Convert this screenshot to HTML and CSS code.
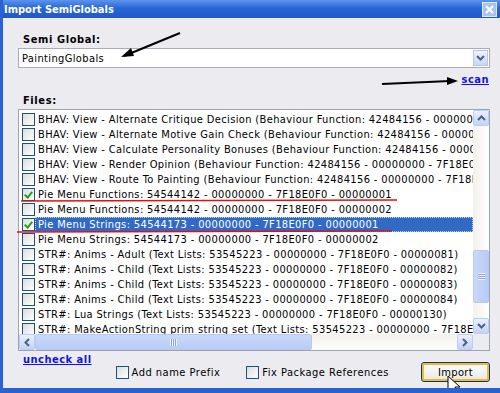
FILE: index.html
```html
<!DOCTYPE html>
<html lang="en">
<head>
    <meta charset="UTF-8">
    <title>Import SemiGlobals</title>
    <link rel="stylesheet" href="styles.css">
</head>
<body>
    <div class="window">
        <div class="titlebar">
            <span class="title">Import SemiGlobals</span>
            <span class="close">
                <svg width="11" height="11" viewBox="0 0 11 11"><path d="M2 2 L9 9 M9 2 L2 9" stroke="#fff" stroke-width="2"/></svg>
            </span>
        </div>

        <div class="content">
            <div class="label">Semi Global:</div>
            <div class="combo">
                <span class="combo-text">PaintingGlobals</span>
                <span class="btn-arrow">
                    <svg width="9" height="6" viewBox="0 0 9 6"><path d="M1 1 L4.5 4.5 L8 1" fill="none" stroke="#4d6185" stroke-width="2"/></svg>
                </span>
            </div>
            <div class="scan-row"><a class="link" href="#">scan</a></div>

            <div class="label files">Files:</div>
            <div class="listbox">
                <div class="list-main">
                    <div class="rows">
                        <div class="row"><span class="cb"></span><span class="txt">BHAV: View - Alternate Critique Decision (Behaviour Function: 42484156 - 00000000 - 7F18E0F0 - 00000001)</span></div>
                        <div class="row"><span class="cb"></span><span class="txt">BHAV: View - Alternate Motive Gain Check (Behaviour Function: 42484156 - 00000000 - 7F18E0F0 - 00000001)</span></div>
                        <div class="row"><span class="cb"></span><span class="txt">BHAV: View - Calculate Personality Bonuses (Behaviour Function: 42484156 - 00000000 - 7F18E0F0 - 00000001)</span></div>
                        <div class="row"><span class="cb"></span><span class="txt">BHAV: View - Render Opinion (Behaviour Function: 42484156 - 00000000 - 7F18E0F0 - 00000001)</span></div>
                        <div class="row"><span class="cb"></span><span class="txt">BHAV: View - Route To Painting (Behaviour Function: 42484156 - 00000000 - 7F18E0F0 - 00000001)</span></div>
                        <div class="row"><span class="cb checked"></span><span class="txt">Pie Menu Functions: 54544142 - 00000000 - 7F18E0F0 - 00000001</span></div>
                        <div class="row"><span class="cb"></span><span class="txt">Pie Menu Functions: 54544142 - 00000000 - 7F18E0F0 - 00000002</span></div>
                        <div class="row selected"><span class="cb checked"></span><span class="txt">Pie Menu Strings: 54544173 - 00000000 - 7F18E0F0 - 00000001</span></div>
                        <div class="row"><span class="cb"></span><span class="txt">Pie Menu Strings: 54544173 - 00000000 - 7F18E0F0 - 00000002</span></div>
                        <div class="row"><span class="cb"></span><span class="txt">STR#: Anims - Adult (Text Lists: 53545223 - 00000000 - 7F18E0F0 - 00000081)</span></div>
                        <div class="row"><span class="cb"></span><span class="txt">STR#: Anims - Child (Text Lists: 53545223 - 00000000 - 7F18E0F0 - 00000082)</span></div>
                        <div class="row"><span class="cb"></span><span class="txt">STR#: Anims - Child (Text Lists: 53545223 - 00000000 - 7F18E0F0 - 00000083)</span></div>
                        <div class="row"><span class="cb"></span><span class="txt">STR#: Anims - Child (Text Lists: 53545223 - 00000000 - 7F18E0F0 - 00000084)</span></div>
                        <div class="row"><span class="cb"></span><span class="txt">STR#: Lua Strings (Text Lists: 53545223 - 00000000 - 7F18E0F0 - 00000130)</span></div>
                        <div class="row"><span class="cb"></span><span class="txt">STR#: MakeActionString prim string set (Text Lists: 53545223 - 00000000 - 7F18E0F0 - 00000001)</span></div>
                    </div>
                    <div class="vscroll">
                        <span class="sbtn">
                            <svg width="9" height="6" viewBox="0 0 9 6"><path d="M1 5 L4.5 1.5 L8 5" fill="none" stroke="#4d6185" stroke-width="2"/></svg>
                        </span>
                        <div class="vtrack">
                            <span class="vthumb"><span class="grip-h"></span></span>
                        </div>
                        <span class="sbtn">
                            <svg width="9" height="6" viewBox="0 0 9 6"><path d="M1 1 L4.5 4.5 L8 1" fill="none" stroke="#4d6185" stroke-width="2"/></svg>
                        </span>
                    </div>
                </div>
                <div class="hscroll">
                    <span class="sbtn">
                        <svg width="6" height="9" viewBox="0 0 6 9"><path d="M5 1 L1.5 4.5 L5 8" fill="none" stroke="#4d6185" stroke-width="2"/></svg>
                    </span>
                    <div class="htrack">
                        <span class="hthumb"><span class="grip-v"></span></span>
                    </div>
                    <span class="sbtn">
                        <svg width="6" height="9" viewBox="0 0 6 9"><path d="M1 1 L4.5 4.5 L1 8" fill="none" stroke="#4d6185" stroke-width="2"/></svg>
                    </span>
                    <span class="corner"></span>
                </div>
            </div>

            <div class="footer">
                <a class="link" href="#">uncheck all</a>
                <label class="opt opt-prefix"><span class="cb"></span>Add name Prefix</label>
                <label class="opt opt-fix"><span class="cb"></span>Fix Package References</label>
                <button class="import">Import</button>
            </div>
        </div>

        <!-- hand-drawn annotations on top of the dialog -->
        <svg class="annot" width="500" height="393" viewBox="0 0 500 393">
            <path d="M180 33 L124 56" stroke="#000" stroke-width="2" fill="none"/>
            <path d="M121 57 L131 48 L134 56 Z" fill="#000"/>
            <path d="M382 84 L450 81" stroke="#000" stroke-width="2" fill="none"/>
            <path d="M458 81 L447 77 L447 85 Z" fill="#000"/>
            <path d="M21 201 L397 200" stroke="#e01010" stroke-width="1.5" fill="none"/>
            <path d="M17 232 L392 231" stroke="#e01010" stroke-width="1.5" fill="none"/>
            <path d="M448 376 L448 392 L452 388 L455 393 L457 392 L455 387 L460 387 Z" fill="#fff" stroke="#000" stroke-width="1"/>
        </svg>
    </div>
</body>
</html>
```

FILE: styles.css
```css
body {
    margin: 0;
    font-family: "DejaVu Sans Condensed", "DejaVu Sans", sans-serif;
    font-size: 11px;
    letter-spacing: 0.37px;
    color: #000;
}

.window {
    position: relative;
    width: 500px;
    height: 393px;
    background: #ecebef;
    border-left: 3px solid #2a62d2;
    box-sizing: border-box;
    border-bottom: 5px solid #2a62d2;
    overflow: hidden;
}

.titlebar {
    height: 18px;
    margin-left: -3px;
    display: flex;
    align-items: center;
    justify-content: space-between;
    padding: 0 3px 0 4px;
    background: linear-gradient(#5b95ec, #2a66d6 45%, #1f58c8);
    color: #fff;
}

.title {
    font-weight: bold;
    font-size: 11px;
    letter-spacing: 0;
}

.close {
    width: 13px;
    height: 13px;
    display: flex;
    align-items: center;
    justify-content: center;
    background: #a9c3ef;
    border: 1px solid #dfe9fb;
}

.content {
    padding: 14px 10px 0 15px;
}

.label {
    font-weight: bold;
    height: 16px;
    line-height: 16px;
    padding-left: 5px;
    letter-spacing: 0.6px;
}

.combo {
    height: 20px;
    box-sizing: border-box;
    border: 1px solid #a8adb8;
    background: #fff;
    display: flex;
    align-items: center;
    justify-content: space-between;
    padding: 0 1px 0 3px;
}

.btn-arrow {
    width: 15px;
    height: 16px;
    box-sizing: border-box;
    border: 1px solid #b7c6e6;
    background: linear-gradient(#eef3fd, #c6d6f5);
    display: flex;
    align-items: center;
    justify-content: center;
}

.scan-row {
    height: 22px;
    display: flex;
    justify-content: flex-end;
    align-items: center;
    padding-right: 1px;
}

.link {
    color: #1212ee;
    font-weight: bold;
    text-decoration: underline;
    letter-spacing: 0.5px;
}

.files {
    margin-top: 3px;
}

.listbox {
    height: 242px;
    box-sizing: border-box;
    border: 1px solid #9ca4b1;
    background: #fff;
    display: flex;
    flex-direction: column;
}

.list-main {
    flex: 1;
    display: flex;
    min-height: 0;
}

.rows {
    flex: 1;
    overflow: hidden;
    padding-top: 2px;
    min-width: 0;
}

.row {
    height: 15px;
    display: flex;
    align-items: center;
    white-space: nowrap;
    padding-left: 3px;
}

.row .txt {
    padding-left: 3px;
    height: 15px;
    line-height: 15px;
    flex: 1;
}

.row.selected .txt {
    background: #316ac5;
    color: #fff;
    outline: 1px dotted #c9d6f0;
    outline-offset: -1px;
}

.cb {
    width: 13px;
    height: 13px;
    box-sizing: border-box;
    border: 1px solid #1c5180;
    background: linear-gradient(135deg, #dcdcd7, #fff);
    flex-shrink: 0;
    position: relative;
}

.cb.checked::after {
    content: "";
    position: absolute;
    left: 3px;
    top: 1px;
    width: 3px;
    height: 6px;
    border: solid #21a121;
    border-width: 0 2px 2px 0;
    transform: rotate(40deg);
}

.vscroll {
    width: 16px;
    display: flex;
    flex-direction: column;
    background: #f4f4f0;
}

.sbtn {
    width: 16px;
    height: 16px;
    box-sizing: border-box;
    border: 1px solid #bccdf2;
    border-radius: 2px;
    background: linear-gradient(#eaf0fd, #c2d3f6);
    display: flex;
    align-items: center;
    justify-content: center;
    flex-shrink: 0;
}

.vtrack {
    flex: 1;
    display: flex;
    flex-direction: column;
    padding-top: 124px;
    background: linear-gradient(90deg, #f3f1ec, #fefefd);
}

.vthumb {
    height: 53px;
    box-sizing: border-box;
    border: 1px solid #b8c9ef;
    border-radius: 2px;
    background: linear-gradient(90deg, #c9d8fa, #b7cbf7);
    display: flex;
    align-items: center;
    justify-content: center;
}

.grip-h {
    width: 7px;
    height: 7px;
    background: repeating-linear-gradient(#eef3fe 0 1px, #8ea5d5 1px 2px);
}

.hscroll {
    height: 16px;
    display: flex;
    background: linear-gradient(#f3f1ec, #fefefd);
}

.htrack {
    flex: 1;
    display: flex;
    padding-right: 145px;
}

.hthumb {
    flex: 1;
    box-sizing: border-box;
    border: 1px solid #b8c9ef;
    border-radius: 2px;
    background: linear-gradient(#cad9fa, #b8ccf7);
    display: flex;
    align-items: center;
    justify-content: center;
}

.grip-v {
    width: 7px;
    height: 7px;
    background: repeating-linear-gradient(90deg, #eef3fe 0 1px, #8ea5d5 1px 2px);
}

.corner {
    width: 16px;
    background: #ecebef;
}

.footer {
    height: 37px;
    display: flex;
    align-items: flex-start;
    padding: 2px 0 0 5px;
}

.opt {
    display: flex;
    align-items: center;
    margin-top: 13px;
    letter-spacing: 0.5px;
}

.opt .cb {
    margin-right: 3px;
}

.opt-prefix {
    margin-left: 24px;
}

.opt-fix {
    margin-left: 26px;
}

.import {
    margin-left: auto;
    margin-top: 9px;
    width: 69px;
    height: 20px;
    font-family: inherit;
    font-size: 11px;
    border: 1px solid #003c74;
    border-radius: 3px;
    background: linear-gradient(#fffffe, #ecebe6 85%, #d6d0c5);
    box-shadow: inset 0 0 0 2px #f8b636;
    padding: 0;
    letter-spacing: 0.4px;
}

.annot {
    position: absolute;
    left: -3px;
    top: 0;
    pointer-events: none;
}
```
